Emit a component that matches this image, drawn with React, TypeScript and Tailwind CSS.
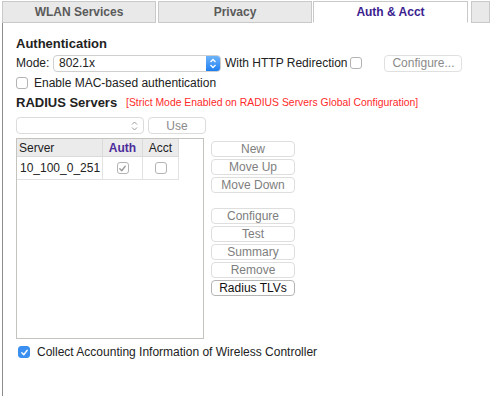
import React from "react";

const font = "font-['Liberation_Sans',Arial,sans-serif]";

const Tab = ({ label, active, w }: { label: string; active?: boolean; w: string }) => (
  <div
    className={`${w} h-[22px] flex items-center justify-center text-[12px] font-bold border border-[#c9c9c9] ${
      active ? "bg-white text-[#3b1d8f] border-b-white" : "bg-[#e9e9e9] text-[#5a5a5a]"
    }`}
  >
    {label}
  </div>
);

const Btn = ({ label, dark }: { label: string; dark?: boolean }) => (
  <div
    className={`h-[16px] w-[84px] flex items-center justify-center rounded-[4px] border bg-white text-[12px] leading-none ${
      dark ? "border-[#b5b5b5] text-[#111]" : "border-[#dedede] text-[#7e7e7e]"
    }`}
  >
    {label}
  </div>
);

const Box = ({ checked, gray }: { checked?: boolean; gray?: boolean }) => (
  <div
    className={`w-[12px] h-[12px] rounded-[3px] border flex items-center justify-center ${
      checked && !gray ? "bg-[#3b8ff0] border-[#3b8ff0]" : "bg-white border-[#b3b3b3]"
    }`}
  >
    {checked && (
      <svg width="9" height="9" viewBox="0 0 10 10">
        <path
          d="M2 5.2 L4.2 7.5 L8 2.5"
          fill="none"
          stroke={gray ? "#9a9a9a" : "#fff"}
          strokeWidth="1.5"
          strokeLinecap="round"
          strokeLinejoin="round"
        />
      </svg>
    )}
  </div>
);

export default function App() {
  return (
    <div className={`w-[490px] h-[396px] bg-white overflow-hidden text-[#222] ${font}`}>
      {/* tabs */}
      <div className="flex gap-[2px] pl-[2px] pt-[1px]">
        <div className="shrink-0">
          <Tab label="WLAN Services" w="w-[154px]" />
        </div>
        <div className="shrink-0">
          <Tab label="Privacy" w="w-[154px]" />
        </div>
        <div className="shrink-0 -ml-[1px]">
          <Tab label="Auth & Acct" w="w-[155px]" active />
        </div>
        <div className="flex-1 ml-[1px]">
          <Tab label="" w="w-full" />
        </div>
      </div>

      <div className="ml-[2px] border-l border-[#8c8c8c] h-[374px] pl-[13px]">
        <div className="pt-[13px] text-[13px] font-bold leading-[16px]">Authentication</div>

        {/* mode row */}
        <div className="mt-[2px] flex items-center h-[18px] text-[12px]">
          <span className="w-[37px]">Mode:</span>
          <div className="flex h-[17px] w-[168px] rounded-[4px] border border-[#cfcfcf] bg-white">
            <span className="flex-1 pl-[5px] leading-[15px]">802.1x</span>
            <div className="w-[14px] rounded-r-[3px] bg-gradient-to-b from-[#6cb3fa] to-[#1b7ff0] flex items-center justify-center">
              <svg width="8" height="11" viewBox="0 0 8 11">
                <path d="M1.5 4 L4 1.5 L6.5 4 M1.5 7 L4 9.5 L6.5 7" fill="none" stroke="#fff" strokeWidth="1.3" />
              </svg>
            </div>
          </div>
          <span className="ml-[4px]">With HTTP Redirection</span>
          <div className="ml-[3px]">
            <Box />
          </div>
          <div className="ml-[22px] h-[17px] w-[78px] rounded-[4px] border border-[#e0e0e0] flex items-center justify-center text-[#8a8a8a]">
            Configure...
          </div>
        </div>

        {/* MAC */}
        <div className="mt-[3px] flex items-center gap-[6px] h-[16px] text-[12px]">
          <Box />
          <span>Enable MAC-based authentication</span>
        </div>

        {/* RADIUS header */}
        <div className="mt-[3px] flex items-center h-[18px]">
          <span className="text-[13px] font-bold w-[110px]">RADIUS Servers</span>
          <span className="text-[10.4px] text-[#ff2a2a]">
            [Strict Mode Enabled on RADIUS Servers Global Configuration]
          </span>
        </div>

        {/* select + use */}
        <div className="mt-[5px] flex items-center gap-[4px] h-[17px]">
          <div className="w-[128px] h-[17px] rounded-[4px] border border-[#dcdcdc] flex items-center justify-end pr-[5px]">
            <svg width="7" height="10" viewBox="0 0 7 10">
              <path d="M1 3.5 L3.5 1 L6 3.5 M1 6.5 L3.5 9 L6 6.5" fill="none" stroke="#999" strokeWidth="1" />
            </svg>
          </div>
          <div className="w-[58px] h-[17px] rounded-[4px] border border-[#dcdcdc] flex items-center justify-center text-[12px] text-[#8a8a8a]">
            Use
          </div>
        </div>

        {/* table + buttons */}
        <div className="mt-[4px] flex">
          <div className="w-[188px] h-[201px] border border-[#c4c3bd] bg-white">
            <div className="flex text-[12px] h-[18px]">
              <div className="w-[86px] bg-[#ebebeb] border-r border-b border-[#dadada] pl-[2px] leading-[18px]">Server</div>
              <div className="w-[40px] bg-[#ebebeb] border-r border-b border-[#dadada] text-center font-bold text-[#4a2a9a] leading-[18px]">Auth</div>
              <div className="w-[36px] bg-[#ebebeb] border-r border-b border-[#dadada] text-center leading-[18px]">Acct</div>
            </div>
            <div className="flex text-[12px] h-[23px]">
              <div className="w-[86px] border-r border-b border-[#e2e2e2] pl-[3px] flex items-center">10_100_0_251</div>
              <div className="w-[40px] border-r border-b border-[#e2e2e2] flex items-center justify-center">
                <Box checked gray />
              </div>
              <div className="w-[36px] border-r border-b border-[#e2e2e2] flex items-center justify-center">
                <Box />
              </div>
            </div>
          </div>

          <div className="ml-[7px] pt-[3px] flex flex-col gap-[2px]">
            <Btn label="New" />
            <Btn label="Move Up" />
            <Btn label="Move Down" />
            <div className="h-[11px]" />
            <Btn label="Configure" />
            <Btn label="Test" />
            <Btn label="Summary" />
            <Btn label="Remove" />
            <Btn label="Radius TLVs" dark />
          </div>
        </div>

        {/* collect */}
        <div className="mt-[6px] pl-[2px] flex items-center gap-[7px] h-[14px] text-[12px]">
          <Box checked />
          <span>Collect Accounting Information of Wireless Controller</span>
        </div>
      </div>
    </div>
  );
}
